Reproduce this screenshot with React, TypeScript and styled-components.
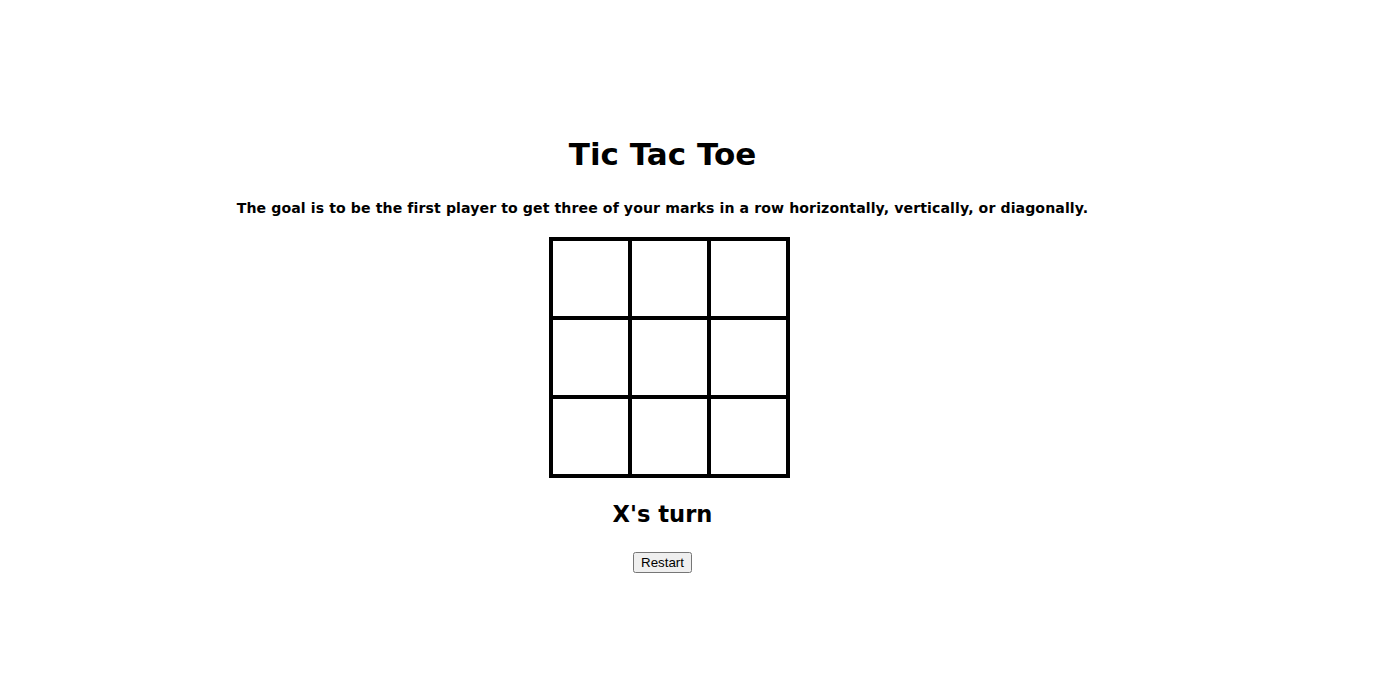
import React, { useState } from "react";
import styled, { createGlobalStyle } from "styled-components";

const Global = createGlobalStyle`
  html, body { margin: 0; padding: 0; background: #ffffff; }
  body { font-family: "DejaVu Sans", "Liberation Sans", sans-serif; color: #000; }
`;

const Page = styled.main`
  width: 1325px;
  padding-top: 134px;
  display: flex;
  flex-direction: column;
  align-items: center;
  text-align: center;
`;

const Title = styled.h1`
  margin: 0;
  font-size: 31px;
  line-height: 40px;
  font-weight: 700;
`;

const Goal = styled.p`
  margin: 24px 0 0;
  font-size: 14.1px;
  line-height: 20px;
  font-weight: 700;
  letter-spacing: 0.1px;
`;

const Board = styled.div`
  margin: 19px 0 0 14px;
  display: grid;
  grid-template-columns: repeat(3, 79px);
  grid-template-rows: repeat(3, 79px);
  border: 2px solid #000;
`;

const Cell = styled.button`
  box-sizing: border-box;
  width: 79px;
  height: 79px;
  margin: 0;
  padding: 0;
  border: 2px solid #000;
  border-radius: 0;
  background: #fff;
  font-family: "DejaVu Sans", sans-serif;
  font-size: 40px;
  font-weight: 700;
  cursor: pointer;
`;

const Status = styled.h2`
  margin: 21px 0 0;
  font-size: 22.6px;
  line-height: 30px;
  font-weight: 700;
`;

const Restart = styled.button`
  margin-top: 23px;
  font-family: "Liberation Sans", Arial, sans-serif;
  font-size: 13.333px;
`;

export default function App() {
  const [cells, setCells] = useState<string[]>(Array(9).fill(""));
  const [xTurn, setXTurn] = useState(true);

  const play = (i: number) => {
    if (cells[i]) return;
    const next = cells.slice();
    next[i] = xTurn ? "X" : "O";
    setCells(next);
    setXTurn(!xTurn);
  };

  return (
    <>
      <Global />
      <Page>
        <Title>Tic Tac Toe</Title>
        <Goal>
          The goal is to be the first player to get three of your marks in a row horizontally, vertically, or diagonally.
        </Goal>
        <Board>
          {cells.map((c, i) => (
            <Cell key={i} onClick={() => play(i)}>
              {c}
            </Cell>
          ))}
        </Board>
        <Status>{xTurn ? "X's turn" : "O's turn"}</Status>
        <Restart
          onClick={() => {
            setCells(Array(9).fill(""));
            setXTurn(true);
          }}
        >
          Restart
        </Restart>
      </Page>
    </>
  );
}
